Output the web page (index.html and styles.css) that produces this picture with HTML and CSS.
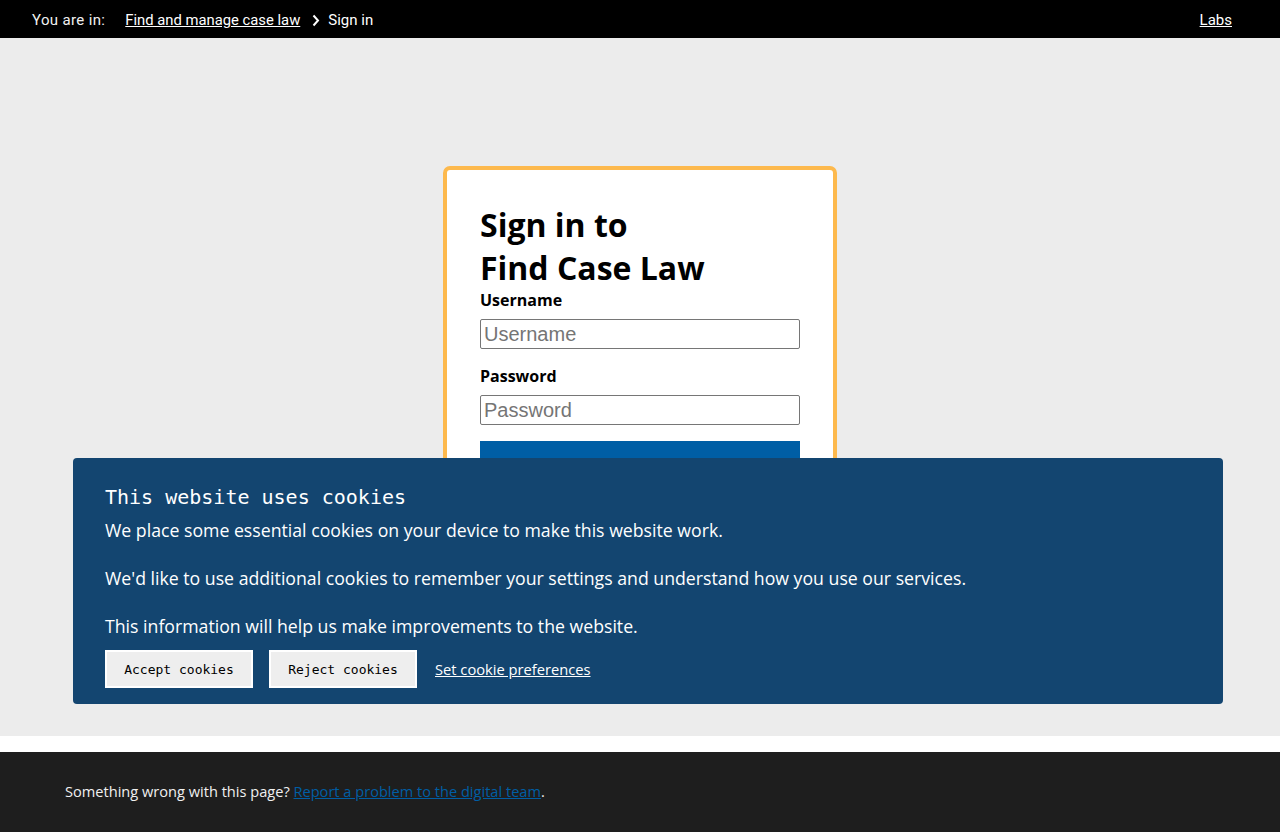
FILE: index.html
```html
<!DOCTYPE html>
<html lang="en">
<head>
<meta charset="utf-8">
<title>Sign in - Find Case Law</title>
<link rel="stylesheet" href="styles.css">
</head>
<body>
<header class="topbar">
  <nav class="crumbs">
    <span class="crumbs__label">You are in:</span>
    <a href="#" class="crumbs__link">Find and manage case law</a>
    <svg class="crumbs__chev" width="8" height="13" viewBox="0 0 8 13" aria-hidden="true"><path d="M1.5 1.5 L6 6.5 L1.5 11.5" fill="none" stroke="#fff" stroke-width="2"/></svg>
    <span class="crumbs__current">Sign in</span>
  </nav>
  <a href="#" class="topbar__labs">Labs</a>
</header>

<main class="main">
  <div class="card">
    <h1 class="card__title">Sign in to<br>Find Case Law</h1>
    <form class="form">
      <label class="form__label" for="u">Username</label>
      <input class="form__input" id="u" type="text" placeholder="Username">
      <label class="form__label form__label--gap" for="p">Password</label>
      <input class="form__input" id="p" type="password" placeholder="Password">
      <button class="form__submit" type="button">Sign in</button>
    </form>
  </div>
</main>

<div class="gap"></div>

<footer class="footer">
  <p class="footer__text">Something wrong with this page? <a href="#" class="footer__link">Report a problem to the digital team</a>.</p>
</footer>

<section class="cookies">
  <h2 class="cookies__title">This website uses cookies</h2>
  <p class="cookies__p">We place some essential cookies on your device to make this website work.</p>
  <p class="cookies__p">We'd like to use additional cookies to remember your settings and understand how you use our services.</p>
  <p class="cookies__p">This information will help us make improvements to the website.</p>
  <div class="cookies__actions">
    <button class="cookies__btn" type="button">Accept cookies</button>
    <button class="cookies__btn" type="button">Reject cookies</button>
    <a href="#" class="cookies__link">Set cookie preferences</a>
  </div>
</section>
</body>
</html>
```

FILE: styles.css
```css
* { box-sizing: border-box; }
html, body { margin: 0; padding: 0; }
body {
  font-family: "Open Sans", "Noto Sans", sans-serif;
  background: #1e1e1e;
  color: #0b0c0c;
}

.topbar {
  background: #000;
  height: 38px;
  display: flex;
  align-items: center;
  justify-content: space-between;
  padding: 2px 48px 0 32px;
  font-family: Roboto, "Liberation Sans", sans-serif;
  font-size: 15px;
  color: #fff;
}
.crumbs { display: flex; align-items: center; }
.crumbs__label { margin-right: 20px; color: #f0f0f0; letter-spacing: 0.35px; }
.crumbs__link { color: #fff; text-decoration: underline; font-size: 14.8px; }
.crumbs__chev { margin: 0 8px 0 12px; }
.crumbs__current { color: #fff; }
.topbar__labs { color: #fff; text-decoration: underline; }

.main {
  background: #ececec;
  height: 698px;
  padding-top: 128px;
  display: flex;
  justify-content: center;
  overflow: hidden;
}
.card {
  width: 394px;
  height: 420px;
  background: #fff;
  border: 4px solid #fdb94d;
  border-radius: 7px;
  padding: 33px 33px 32px 33px;
}
.card__title {
  margin: 0;
  font-size: 32px;
  line-height: 43px;
  font-weight: 700;
  color: #000;
}
.form { display: flex; flex-direction: column; }
.form__label {
  font-weight: 700;
  font-size: 16px;
  line-height: 22px;
  color: #000;
  margin-bottom: 8px;
}
.form__label--gap { margin-top: 16px; margin-bottom: 8px; }
.form__input {
  width: 320px;
  height: 30px;
  border: 1px solid #767676;
  border-radius: 2px;
  padding: 0 3px;
  font-family: "Liberation Sans", Arial, sans-serif;
  font-size: 20px;
  color: #000;
}
.form__input::placeholder { color: #757575; }
.form__submit {
  margin-top: 16px;
  width: 320px;
  height: 52px;
  border: 0;
  background: #005ea5;
  color: #fff;
  font-family: "Open Sans", sans-serif;
  font-size: 18px;
  font-weight: 700;
}

.gap { height: 16px; background: #fff; }

.footer {
  background: #1e1e1e;
  height: 80px;
  padding: 0 65px;
  display: flex;
  align-items: center;
}
.footer__text {
  margin: 0 0 3px 0;
  font-size: 14.6px;
  color: #f0f0f0;
}
.footer__link { color: #005ea5; text-decoration: underline; }

.cookies {
  position: fixed;
  left: 73px;
  top: 458px;
  width: 1150px;
  height: 246px;
  background: #134570;
  border-radius: 4px;
  padding: 26px 32px 0 32px;
  color: #fff;
}
.cookies__title {
  margin: 0 0 8px 0;
  font-family: "DejaVu Sans Mono", "Liberation Mono", monospace;
  font-weight: 400;
  font-size: 20px;
  line-height: 26px;
}
.cookies__p {
  margin: 0 0 23px 0;
  font-size: 17.7px;
  line-height: 25px;
}
.cookies__p:last-of-type { margin-bottom: 11px; }
.cookies__actions {
  display: flex;
  align-items: center;
  gap: 16px;
}
.cookies__btn {
  width: 148px;
  height: 38px;
  background: #eee;
  border: 2px solid #fff;
  border-radius: 0;
  font-family: "DejaVu Sans Mono", "Liberation Mono", monospace;
  font-size: 13px;
  color: #000;
  padding: 0;
}
.cookies__link {
  margin-left: 2px;
  color: #fff;
  font-size: 14.7px;
  text-decoration: underline;
}
```
